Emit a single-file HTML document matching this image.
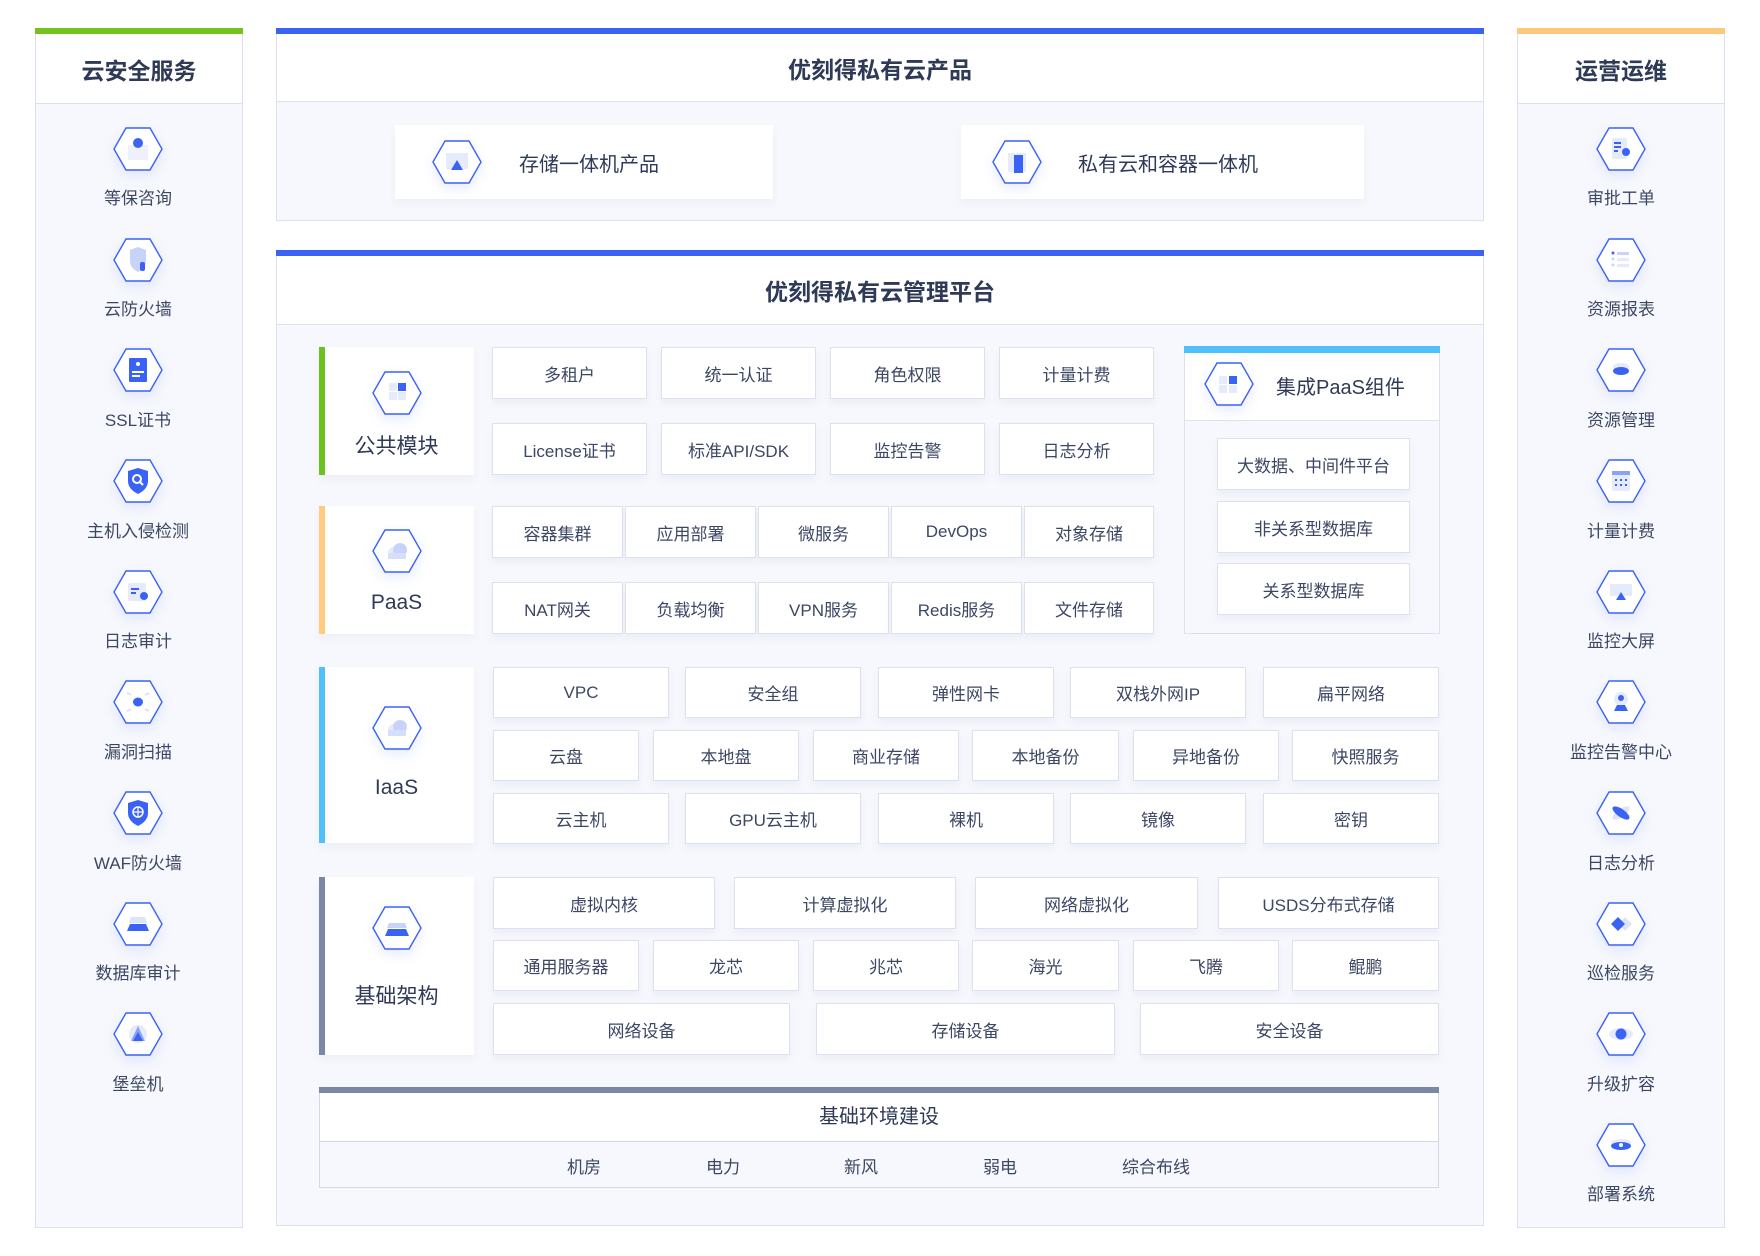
<!DOCTYPE html>
<html><head><meta charset="utf-8"><style>
*{margin:0;padding:0;box-sizing:border-box}
body{width:1760px;height:1256px;background:#fff;position:relative;font-family:"Liberation Sans","Noto Sans CJK SC",sans-serif;color:#3c4763;overflow:hidden}
.a{position:absolute}
.panel{position:absolute;background:#f7f8fd;border:1px solid #dde1ef}
.hd{position:absolute;left:0;right:0;top:0;background:#fff;border-bottom:1px solid #dde1ef;display:flex;align-items:center;justify-content:center;font-size:23px;font-weight:bold;color:#2f3a56}
.bar{position:absolute;left:-1px;right:-1px;top:-1px;height:6px}
.c{position:absolute;background:#fff;border:1px solid #dde1ef;display:flex;align-items:center;justify-content:center;font-size:17px;color:#3c4763;box-shadow:0 5px 8px rgba(90,110,170,.07)}
.lab{position:absolute;width:200px;text-align:center;font-size:17px;color:#3c4763;margin-top:-3px}
.hx{position:absolute;width:50px;height:44px;filter:drop-shadow(0 5px 6px rgba(58,99,245,.12))}
.mod{position:absolute;background:#fff;box-shadow:0 5px 8px rgba(90,110,170,.06)}
.mod .t{position:absolute;left:0;right:0;text-align:center;font-size:21px;color:#2f3a56}
</style></head><body>

<svg width="0" height="0" style="position:absolute"><defs>
<symbol id="h" viewBox="0 0 50 44"><polygon points="1,22 13,1 37,1 49,22 37,43 13,43" fill="#fff" stroke="#3a63f5" stroke-width="1.4"/></symbol>
</defs></svg>

<!-- LEFT PANEL -->
<div class="panel" style="left:35px;top:28px;width:208px;height:1200px">
 <div class="bar" style="background:#72c41a"></div>
 <div class="hd" style="height:70px;top:5px">云安全服务</div>
</div>
<!-- RIGHT PANEL -->
<div class="panel" style="left:1517px;top:28px;width:208px;height:1200px">
 <div class="bar" style="background:#fcc97b"></div>
 <div class="hd" style="height:70px;top:5px">运营运维</div>
</div>
<!-- CENTER TOP -->
<div class="panel" style="left:276px;top:28px;width:1208px;height:193px">
 <div class="bar" style="background:#3a63f5"></div>
 <div class="hd" style="height:68px;top:5px">优刻得私有云产品</div>
</div>
<div class="mod" style="left:395px;top:125px;width:378px;height:74px"><div class="a" style="left:124px;top:23px;font-size:20px;color:#2f3a56">存储一体机产品</div></div>
<div class="mod" style="left:961px;top:125px;width:403px;height:74px"><div class="a" style="left:117px;top:23px;font-size:20px;color:#2f3a56">私有云和容器一体机</div></div>
<svg class="hx" style="left:432px;top:140px"><use href="#h"/><rect x="14" y="13" width="22" height="16" fill="#e6ebfb"/><polygon points="25,20 31,30 19,30" fill="#3a63f5"/></svg>
<svg class="hx" style="left:992px;top:140px"><use href="#h"/><rect x="16" y="13" width="18" height="19" fill="#e6ebfb"/><rect x="22" y="15" width="9" height="18" fill="#3a63f5"/></svg>

<!-- CENTER MAIN -->
<div class="panel" style="left:276px;top:250px;width:1208px;height:976px">
 <div class="bar" style="background:#3a63f5"></div>
 <div class="hd" style="height:69px;top:5px">优刻得私有云管理平台</div>
</div>

<!-- module boxes -->
<div class="mod" style="left:319px;top:347px;width:155px;height:128px"><div class="a" style="left:0;top:0;width:6px;height:100%;background:#6cc11e"></div><div class="t" style="top:83px">公共模块</div></div>
<div class="mod" style="left:319px;top:506px;width:155px;height:128px"><div class="a" style="left:0;top:0;width:6px;height:100%;background:#ffcb7e"></div><div class="t" style="top:85px">PaaS</div></div>
<div class="mod" style="left:319px;top:667px;width:155px;height:176px"><div class="a" style="left:0;top:0;width:6px;height:100%;background:#4fc0fa"></div><div class="t" style="top:109px">IaaS</div></div>
<div class="mod" style="left:319px;top:877px;width:155px;height:178px"><div class="a" style="left:0;top:0;width:6px;height:100%;background:#7b88a4"></div><div class="t" style="top:103px">基础架构</div></div>

<svg class="hx" style="left:372px;top:371px"><use href="#h"/><rect x="17" y="12" width="8" height="8" fill="#e6ebfb"/><rect x="26" y="12" width="8" height="8" fill="#3a63f5"/><rect x="17" y="21" width="8" height="8" fill="#e6ebfb"/><rect x="26" y="21" width="8" height="8" fill="#e6ebfb"/></svg>
<svg class="hx" style="left:372px;top:529px"><use href="#h"/><circle cx="22" cy="24" r="6" fill="#e6ebfb"/><circle cx="28" cy="21" r="7" fill="#c8d3fa"/><rect x="16" y="24" width="18" height="6" fill="#d6def9"/></svg>
<svg class="hx" style="left:372px;top:706px"><use href="#h"/><circle cx="22" cy="24" r="6" fill="#e6ebfb"/><circle cx="28" cy="21" r="7" fill="#c8d3fa"/><rect x="16" y="24" width="18" height="6" fill="#d6def9"/></svg>
<svg class="hx" style="left:372px;top:906px"><use href="#h"/><polygon points="17,17 33,17 35,22 15,22" fill="#c8d3fa"/><polygon points="16,23 34,23 37,30 13,30" fill="#3a63f5"/></svg>

<!-- public cells -->
<div class="c" style="left:492px;top:347px;width:155px;height:52px">多租户</div>
<div class="c" style="left:661px;top:347px;width:155px;height:52px">统一认证</div>
<div class="c" style="left:830px;top:347px;width:155px;height:52px">角色权限</div>
<div class="c" style="left:999px;top:347px;width:155px;height:52px">计量计费</div>
<div class="c" style="left:492px;top:423px;width:155px;height:52px">License证书</div>
<div class="c" style="left:661px;top:423px;width:155px;height:52px">标准API/SDK</div>
<div class="c" style="left:830px;top:423px;width:155px;height:52px">监控告警</div>
<div class="c" style="left:999px;top:423px;width:155px;height:52px">日志分析</div>
<!-- paas cells -->
<div class="c" style="left:492px;top:506px;width:131px;height:52px">容器集群</div>
<div class="c" style="left:625px;top:506px;width:131px;height:52px">应用部署</div>
<div class="c" style="left:758px;top:506px;width:131px;height:52px">微服务</div>
<div class="c" style="left:891px;top:506px;width:131px;height:52px">DevOps</div>
<div class="c" style="left:1024px;top:506px;width:130px;height:52px">对象存储</div>
<div class="c" style="left:492px;top:582px;width:131px;height:52px">NAT网关</div>
<div class="c" style="left:625px;top:582px;width:131px;height:52px">负载均衡</div>
<div class="c" style="left:758px;top:582px;width:131px;height:52px">VPN服务</div>
<div class="c" style="left:891px;top:582px;width:131px;height:52px">Redis服务</div>
<div class="c" style="left:1024px;top:582px;width:130px;height:52px">文件存储</div>

<!-- PaaS components -->
<div class="a" style="left:1184px;top:346px;width:256px;height:288px;background:#f7f8fd;border:1px solid #dde1ef">
 <div class="a" style="left:-1px;right:-1px;top:-1px;height:7px;background:#4fc0fa"></div>
 <div class="a" style="left:0;right:0;top:6px;height:68px;background:#fff;border-bottom:1px solid #dde1ef"></div>
 <div class="a" style="left:91px;top:24px;font-size:20px;color:#2f3a56">集成PaaS组件</div>
</div>
<svg class="hx" style="left:1204px;top:362px"><use href="#h"/><rect x="15" y="14" width="8" height="8" fill="#e6ebfb"/><rect x="25" y="14" width="8" height="8" fill="#3a63f5"/><rect x="15" y="23" width="8" height="8" fill="#e6ebfb"/><rect x="25" y="23" width="8" height="8" fill="#e6ebfb"/></svg>
<div class="c" style="left:1217px;top:438px;width:193px;height:52px">大数据、中间件平台</div>
<div class="c" style="left:1217px;top:501px;width:193px;height:52px">非关系型数据库</div>
<div class="c" style="left:1217px;top:563px;width:193px;height:52px">关系型数据库</div>

<!-- IaaS -->
<div class="c" style="left:493px;top:667px;width:176px;height:51px">VPC</div>
<div class="c" style="left:685px;top:667px;width:176px;height:51px">安全组</div>
<div class="c" style="left:878px;top:667px;width:176px;height:51px">弹性网卡</div>
<div class="c" style="left:1070px;top:667px;width:176px;height:51px">双栈外网IP</div>
<div class="c" style="left:1263px;top:667px;width:176px;height:51px">扁平网络</div>
<div class="c" style="left:493px;top:730px;width:146px;height:51px">云盘</div>
<div class="c" style="left:653px;top:730px;width:146px;height:51px">本地盘</div>
<div class="c" style="left:813px;top:730px;width:146px;height:51px">商业存储</div>
<div class="c" style="left:972px;top:730px;width:147px;height:51px">本地备份</div>
<div class="c" style="left:1133px;top:730px;width:146px;height:51px">异地备份</div>
<div class="c" style="left:1292px;top:730px;width:147px;height:51px">快照服务</div>
<div class="c" style="left:493px;top:793px;width:176px;height:51px">云主机</div>
<div class="c" style="left:685px;top:793px;width:176px;height:51px">GPU云主机</div>
<div class="c" style="left:878px;top:793px;width:176px;height:51px">裸机</div>
<div class="c" style="left:1070px;top:793px;width:176px;height:51px">镜像</div>
<div class="c" style="left:1263px;top:793px;width:176px;height:51px">密钥</div>

<!-- infra -->
<div class="c" style="left:493px;top:877px;width:222px;height:52px">虚拟内核</div>
<div class="c" style="left:734px;top:877px;width:222px;height:52px">计算虚拟化</div>
<div class="c" style="left:975px;top:877px;width:223px;height:52px">网络虚拟化</div>
<div class="c" style="left:1218px;top:877px;width:221px;height:52px">USDS分布式存储</div>
<div class="c" style="left:493px;top:940px;width:146px;height:51px">通用服务器</div>
<div class="c" style="left:653px;top:940px;width:146px;height:51px">龙芯</div>
<div class="c" style="left:813px;top:940px;width:146px;height:51px">兆芯</div>
<div class="c" style="left:972px;top:940px;width:147px;height:51px">海光</div>
<div class="c" style="left:1133px;top:940px;width:146px;height:51px">飞腾</div>
<div class="c" style="left:1292px;top:940px;width:147px;height:51px">鲲鹏</div>
<div class="c" style="left:493px;top:1003px;width:297px;height:52px">网络设备</div>
<div class="c" style="left:816px;top:1003px;width:299px;height:52px">存储设备</div>
<div class="c" style="left:1140px;top:1003px;width:299px;height:52px">安全设备</div>

<!-- base env -->
<div class="a" style="left:319px;top:1087px;width:1120px;height:101px;background:#f7f8fd;border:1px solid #d3d8e8">
 <div class="a" style="left:-1px;right:-1px;top:-1px;height:6px;background:#7b88a4"></div>
 <div class="a" style="left:0;right:0;top:5px;height:49px;background:#fff;border-bottom:1px solid #d3d8e8;display:flex;align-items:center;justify-content:center;font-size:20px;color:#2f3a56;padding-bottom:6px">基础环境建设</div>
</div>
<div class="a" style="left:564px;top:1153px;width:40px;text-align:center;font-size:17px">机房</div>
<div class="a" style="left:703px;top:1153px;width:40px;text-align:center;font-size:17px">电力</div>
<div class="a" style="left:841px;top:1153px;width:40px;text-align:center;font-size:17px">新风</div>
<div class="a" style="left:980px;top:1153px;width:40px;text-align:center;font-size:17px">弱电</div>
<div class="a" style="left:1116px;top:1153px;width:80px;text-align:center;font-size:17px">综合布线</div>

<!-- left icons -->
<svg class="hx" style="left:113px;top:127px"><use href="#h"/><rect x="15" y="18" width="20" height="15" fill="#eef1fc"/><circle cx="25" cy="16" r="5" fill="#3a63f5"/></svg>
<div class="lab" style="left:38px;top:187px">等保咨询</div>
<svg class="hx" style="left:113px;top:238px"><use href="#h"/><path d="M17 12 L25 9 L33 12 L33 23 Q33 30 25 34 Q17 30 17 23Z" fill="#c8d3fa"/><rect x="27" y="24" width="5" height="9" rx="2" fill="#3a63f5"/></svg>
<div class="lab" style="left:38px;top:298px">云防火墙</div>
<svg class="hx" style="left:113px;top:348px"><use href="#h"/><rect x="16" y="10" width="18" height="24" rx="1" fill="#3a63f5"/><rect x="19" y="23" width="12" height="2" fill="#fff"/><rect x="19" y="27" width="8" height="2" fill="#fff"/><circle cx="25" cy="16" r="2" fill="#fff"/></svg>
<div class="lab" style="left:38px;top:409px">SSL证书</div>
<svg class="hx" style="left:113px;top:459px"><use href="#h"/><path d="M15 12 L25 9 L35 12 L35 22 Q35 30 25 35 Q15 30 15 22Z" fill="#3a63f5"/><circle cx="24" cy="20" r="4" fill="none" stroke="#fff" stroke-width="2"/><path d="M27 23 L30 26" stroke="#fff" stroke-width="2"/></svg>
<div class="lab" style="left:38px;top:520px">主机入侵检测</div>
<svg class="hx" style="left:113px;top:570px"><use href="#h"/><rect x="15" y="13" width="18" height="18" rx="2" fill="#e6ebfb"/><rect x="18" y="18" width="8" height="2" fill="#3a63f5"/><rect x="18" y="22" width="5" height="2" fill="#3a63f5"/><circle cx="31" cy="26" r="4" fill="#3a63f5"/></svg>
<div class="lab" style="left:38px;top:630px">日志审计</div>
<svg class="hx" style="left:113px;top:680px"><use href="#h"/><ellipse cx="25" cy="22" rx="5" ry="4.5" fill="#3a63f5"/><path d="M14 13 L18 15 M36 13 L32 15 M14 31 L18 29 M36 31 L32 29" stroke="#dde3f8" stroke-width="2"/></svg>
<div class="lab" style="left:38px;top:741px">漏洞扫描</div>
<svg class="hx" style="left:113px;top:791px"><use href="#h"/><path d="M15 12 L25 9 L35 12 L35 22 Q35 30 25 35 Q15 30 15 22Z" fill="#3a63f5"/><circle cx="25" cy="21" r="5" fill="none" stroke="#fff" stroke-width="1.5"/><path d="M25 16 V26 M20 21 H30" stroke="#fff" stroke-width="1.2"/></svg>
<div class="lab" style="left:38px;top:852px">WAF防火墙</div>
<svg class="hx" style="left:113px;top:902px"><use href="#h"/><polygon points="18,15 32,15 34,21 16,21" fill="#dde3f8"/><polygon points="17,22 33,22 36,29 14,29" fill="#3a63f5"/></svg>
<div class="lab" style="left:38px;top:962px">数据库审计</div>
<svg class="hx" style="left:113px;top:1012px"><use href="#h"/><circle cx="25" cy="22" r="9" fill="#e6ebfb"/><polygon points="25,14 32,29 18,29" fill="#8aa2f7"/><polygon points="25,20 30,29 20,29" fill="#3a63f5"/></svg>
<div class="lab" style="left:38px;top:1073px">堡垒机</div>

<!-- right icons -->
<svg class="hx" style="left:1596px;top:127px"><use href="#h"/><rect x="16" y="11" width="15" height="21" rx="2" fill="#e6ebfb"/><rect x="18" y="15" width="7" height="2" fill="#3a63f5"/><rect x="18" y="19" width="7" height="2" fill="#3a63f5"/><rect x="18" y="23" width="4" height="2" fill="#3a63f5"/><circle cx="30" cy="25" r="4" fill="#3a63f5"/></svg>
<div class="lab" style="left:1521px;top:187px">审批工单</div>
<svg class="hx" style="left:1596px;top:238px"><use href="#h"/><circle cx="17" cy="15" r="1.5" fill="#3a63f5"/><rect x="21" y="14" width="12" height="3" fill="#c8d3fa"/><circle cx="17" cy="21" r="1.5" fill="#c8d3fa"/><rect x="21" y="20" width="12" height="3" fill="#e6ebfb"/><circle cx="17" cy="27" r="1.5" fill="#c8d3fa"/><rect x="21" y="26" width="12" height="3" fill="#e6ebfb"/></svg>
<div class="lab" style="left:1521px;top:298px">资源报表</div>
<svg class="hx" style="left:1596px;top:348px"><use href="#h"/><ellipse cx="25" cy="19" rx="8" ry="4" fill="#e6ebfb"/><ellipse cx="25" cy="23" rx="8" ry="4" fill="#3a63f5"/></svg>
<div class="lab" style="left:1521px;top:409px">资源管理</div>
<svg class="hx" style="left:1596px;top:459px"><use href="#h"/><rect x="16" y="12" width="18" height="20" rx="2" fill="#e6ebfb"/><rect x="16" y="12" width="18" height="4" fill="#8aa2f7"/><g fill="#3a63f5"><rect x="19" y="20" width="2" height="2"/><rect x="24" y="20" width="2" height="2"/><rect x="29" y="20" width="2" height="2"/><rect x="19" y="25" width="2" height="2"/><rect x="24" y="25" width="2" height="2"/><rect x="29" y="25" width="2" height="2"/></g></svg>
<div class="lab" style="left:1521px;top:520px">计量计费</div>
<svg class="hx" style="left:1596px;top:570px"><use href="#h"/><rect x="14" y="14" width="22" height="12" fill="#e6ebfb"/><polygon points="25,22 30,30 20,30" fill="#3a63f5"/></svg>
<div class="lab" style="left:1521px;top:630px">监控大屏</div>
<svg class="hx" style="left:1596px;top:680px"><use href="#h"/><circle cx="25" cy="19" r="7" fill="#e6ebfb"/><circle cx="25" cy="18" r="3" fill="#3a63f5"/><polygon points="21,25 29,25 32,31 18,31" fill="#3a63f5"/></svg>
<div class="lab" style="left:1521px;top:741px">监控告警中心</div>
<svg class="hx" style="left:1596px;top:791px"><use href="#h"/><ellipse cx="25" cy="22" rx="10" ry="4" transform="rotate(-35 25 22)" fill="#dde3f8"/><ellipse cx="25" cy="22" rx="10" ry="4" transform="rotate(35 25 22)" fill="#3a63f5"/></svg>
<div class="lab" style="left:1521px;top:852px">日志分析</div>
<svg class="hx" style="left:1596px;top:902px"><use href="#h"/><polygon points="29,15 36,22 29,29 22,22" fill="#dde3f8"/><polygon points="22,15 29,22 22,29 15,22" fill="#3a63f5"/></svg>
<div class="lab" style="left:1521px;top:962px">巡检服务</div>
<svg class="hx" style="left:1596px;top:1012px"><use href="#h"/><ellipse cx="25" cy="22" rx="12" ry="6" fill="#e6ebfb"/><circle cx="25" cy="22" r="5.5" fill="#3a63f5"/></svg>
<div class="lab" style="left:1521px;top:1073px">升级扩容</div>
<svg class="hx" style="left:1596px;top:1123px"><use href="#h"/><ellipse cx="25" cy="20" rx="10" ry="4" fill="#e6ebfb"/><ellipse cx="25" cy="23" rx="10" ry="4" fill="#3a63f5"/><circle cx="25" cy="22" r="2" fill="#fff"/></svg>
<div class="lab" style="left:1521px;top:1183px">部署系统</div>

</body></html>
